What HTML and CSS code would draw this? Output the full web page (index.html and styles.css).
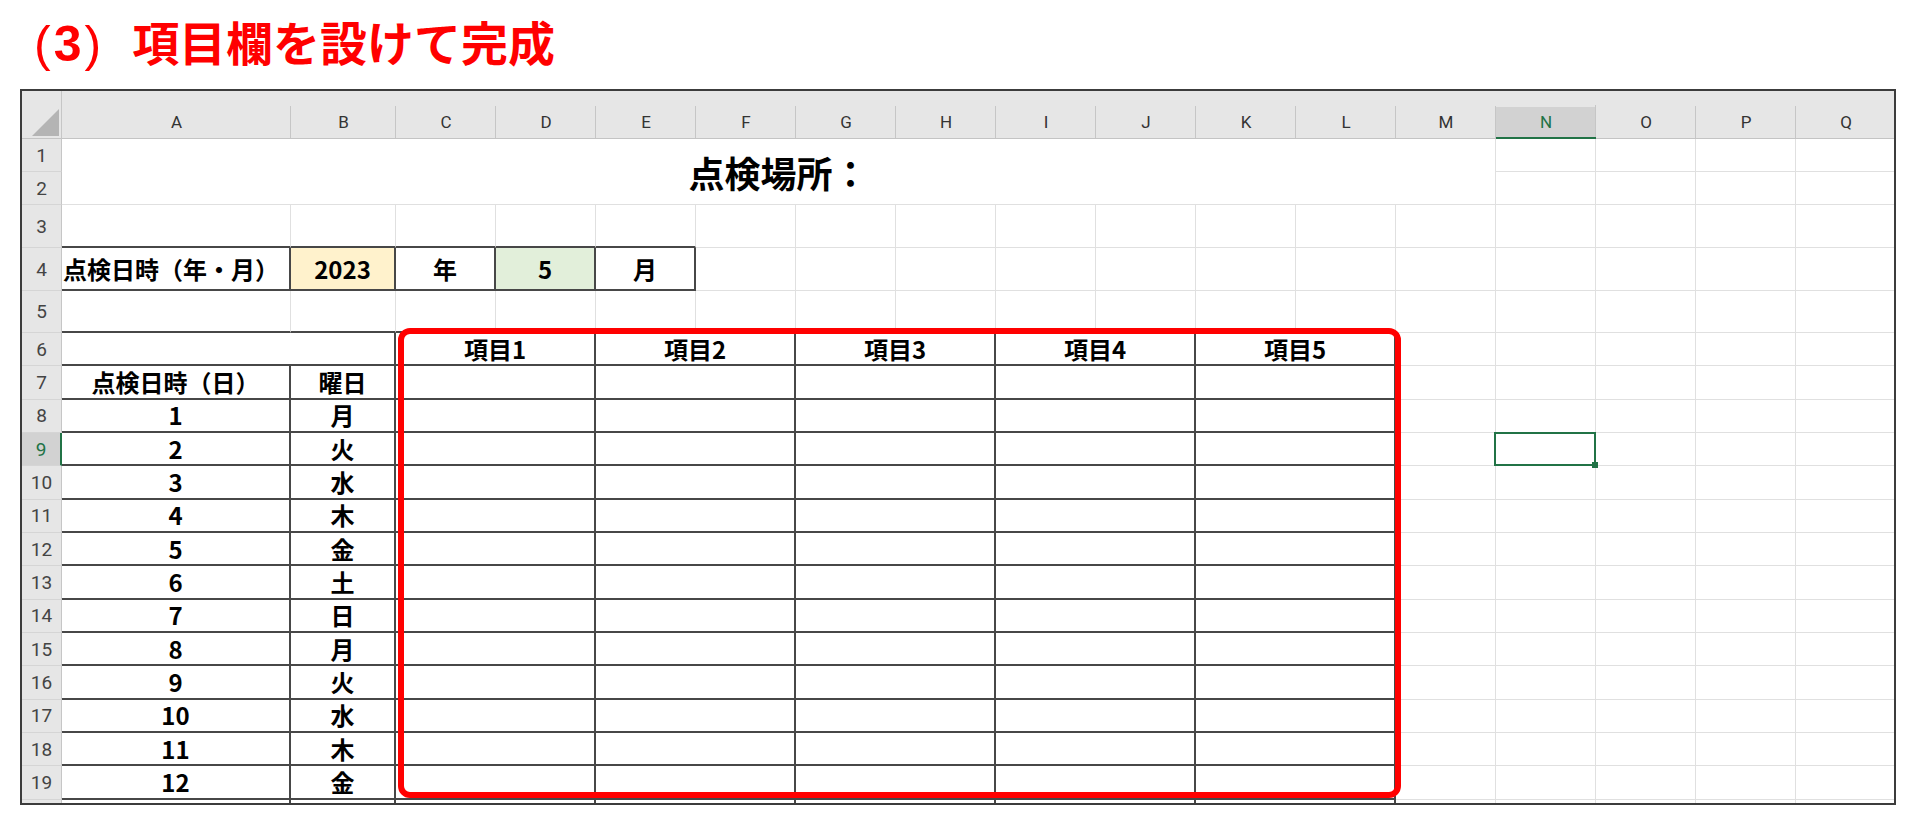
FILE: index.html
```html
<!DOCTYPE html>
<html lang="ja">
<head>
<meta charset="utf-8">
<title>項目欄を設けて完成</title>
<link rel="stylesheet" href="styles.css">
</head>
<body>
<div class="title"><span class="num"><span class="p">(</span>3<span class="p">)</span></span>項目欄を設けて完成</div>
<div class="frame">
  <div class="sheet">
    <div class="corner"><svg width="27" height="27" viewBox="0 0 27 27"><polygon points="27,0 27,27 0,27" fill="#b4b4b4"/></svg></div>
    <div class="ch">A</div><div class="ch">B</div><div class="ch">C</div><div class="ch">D</div><div class="ch">E</div><div class="ch">F</div><div class="ch">G</div><div class="ch">H</div><div class="ch">I</div><div class="ch">J</div><div class="ch">K</div><div class="ch">L</div><div class="ch">M</div><div class="ch on">N</div><div class="ch">O</div><div class="ch">P</div><div class="ch">Q</div>

    <div class="rh">1</div>
    <div class="c place">点検場所：</div>
    <div class="c"></div><div class="c"></div><div class="c"></div><div class="c"></div>

    <div class="rh">2</div>
    <div class="c"></div><div class="c"></div><div class="c"></div><div class="c"></div>

    <div class="rh">3</div>
    <div class="c db"></div><div class="c db"></div><div class="c db"></div><div class="c db"></div><div class="c db"></div>
    <div class="c"></div><div class="c"></div><div class="c"></div><div class="c"></div><div class="c"></div><div class="c"></div><div class="c"></div><div class="c"></div><div class="c"></div><div class="c"></div><div class="c"></div><div class="c"></div>

    <div class="rh">4</div>
    <div class="c db dr left">点検日時（年・月）</div>
    <div class="c db dr yel">2023</div>
    <div class="c db dr">年</div>
    <div class="c db dr grn">5</div>
    <div class="c db dr">月</div>
    <div class="c"></div><div class="c"></div><div class="c"></div><div class="c"></div><div class="c"></div><div class="c"></div><div class="c"></div><div class="c"></div><div class="c"></div><div class="c"></div><div class="c"></div><div class="c"></div>

    <div class="rh">5</div>
    <div class="c db"></div><div class="c db"></div><div class="c db"></div><div class="c db"></div><div class="c db"></div><div class="c db"></div><div class="c db"></div><div class="c db"></div><div class="c db"></div><div class="c db"></div><div class="c db"></div><div class="c db"></div>
    <div class="c"></div><div class="c"></div><div class="c"></div><div class="c"></div><div class="c"></div>

    <div class="rh">6</div>
    <div class="c s2 db dr"></div>
    <div class="c s2 db dr">項目1</div><div class="c s2 db dr">項目2</div><div class="c s2 db dr">項目3</div><div class="c s2 db dr">項目4</div><div class="c s2 db dr">項目5</div>
    <div class="c"></div><div class="c"></div><div class="c"></div><div class="c"></div><div class="c"></div>

    <div class="rh">7</div>
    <div class="c db dr">点検日時（日）</div><div class="c db dr">曜日</div>
    <div class="c s2 db dr"></div><div class="c s2 db dr"></div><div class="c s2 db dr"></div><div class="c s2 db dr"></div><div class="c s2 db dr"></div>
    <div class="c"></div><div class="c"></div><div class="c"></div><div class="c"></div><div class="c"></div>

    <div class="rh">8</div>
    <div class="c db dr">1</div><div class="c db dr">月</div>
    <div class="c s2 db dr"></div><div class="c s2 db dr"></div><div class="c s2 db dr"></div><div class="c s2 db dr"></div><div class="c s2 db dr"></div>
    <div class="c"></div><div class="c"></div><div class="c"></div><div class="c"></div><div class="c"></div>

    <div class="rh on">9</div>
    <div class="c db dr">2</div><div class="c db dr">火</div>
    <div class="c s2 db dr"></div><div class="c s2 db dr"></div><div class="c s2 db dr"></div><div class="c s2 db dr"></div><div class="c s2 db dr"></div>
    <div class="c"></div><div class="c sel"></div><div class="c"></div><div class="c"></div><div class="c"></div>

    <div class="rh">10</div>
    <div class="c db dr">3</div><div class="c db dr">水</div>
    <div class="c s2 db dr"></div><div class="c s2 db dr"></div><div class="c s2 db dr"></div><div class="c s2 db dr"></div><div class="c s2 db dr"></div>
    <div class="c"></div><div class="c"></div><div class="c"></div><div class="c"></div><div class="c"></div>

    <div class="rh">11</div>
    <div class="c db dr">4</div><div class="c db dr">木</div>
    <div class="c s2 db dr"></div><div class="c s2 db dr"></div><div class="c s2 db dr"></div><div class="c s2 db dr"></div><div class="c s2 db dr"></div>
    <div class="c"></div><div class="c"></div><div class="c"></div><div class="c"></div><div class="c"></div>

    <div class="rh">12</div>
    <div class="c db dr">5</div><div class="c db dr">金</div>
    <div class="c s2 db dr"></div><div class="c s2 db dr"></div><div class="c s2 db dr"></div><div class="c s2 db dr"></div><div class="c s2 db dr"></div>
    <div class="c"></div><div class="c"></div><div class="c"></div><div class="c"></div><div class="c"></div>

    <div class="rh">13</div>
    <div class="c db dr">6</div><div class="c db dr">土</div>
    <div class="c s2 db dr"></div><div class="c s2 db dr"></div><div class="c s2 db dr"></div><div class="c s2 db dr"></div><div class="c s2 db dr"></div>
    <div class="c"></div><div class="c"></div><div class="c"></div><div class="c"></div><div class="c"></div>

    <div class="rh">14</div>
    <div class="c db dr">7</div><div class="c db dr">日</div>
    <div class="c s2 db dr"></div><div class="c s2 db dr"></div><div class="c s2 db dr"></div><div class="c s2 db dr"></div><div class="c s2 db dr"></div>
    <div class="c"></div><div class="c"></div><div class="c"></div><div class="c"></div><div class="c"></div>

    <div class="rh">15</div>
    <div class="c db dr">8</div><div class="c db dr">月</div>
    <div class="c s2 db dr"></div><div class="c s2 db dr"></div><div class="c s2 db dr"></div><div class="c s2 db dr"></div><div class="c s2 db dr"></div>
    <div class="c"></div><div class="c"></div><div class="c"></div><div class="c"></div><div class="c"></div>

    <div class="rh">16</div>
    <div class="c db dr">9</div><div class="c db dr">火</div>
    <div class="c s2 db dr"></div><div class="c s2 db dr"></div><div class="c s2 db dr"></div><div class="c s2 db dr"></div><div class="c s2 db dr"></div>
    <div class="c"></div><div class="c"></div><div class="c"></div><div class="c"></div><div class="c"></div>

    <div class="rh">17</div>
    <div class="c db dr">10</div><div class="c db dr">水</div>
    <div class="c s2 db dr"></div><div class="c s2 db dr"></div><div class="c s2 db dr"></div><div class="c s2 db dr"></div><div class="c s2 db dr"></div>
    <div class="c"></div><div class="c"></div><div class="c"></div><div class="c"></div><div class="c"></div>

    <div class="rh">18</div>
    <div class="c db dr">11</div><div class="c db dr">木</div>
    <div class="c s2 db dr"></div><div class="c s2 db dr"></div><div class="c s2 db dr"></div><div class="c s2 db dr"></div><div class="c s2 db dr"></div>
    <div class="c"></div><div class="c"></div><div class="c"></div><div class="c"></div><div class="c"></div>

    <div class="rh">19</div>
    <div class="c db dr">12</div><div class="c db dr">金</div>
    <div class="c s2 db dr"></div><div class="c s2 db dr"></div><div class="c s2 db dr"></div><div class="c s2 db dr"></div><div class="c s2 db dr"></div>
    <div class="c"></div><div class="c"></div><div class="c"></div><div class="c"></div><div class="c"></div>

    <div class="rh"></div>
    <div class="c db dr"></div><div class="c db dr"></div>
    <div class="c s2 db dr"></div><div class="c s2 db dr"></div><div class="c s2 db dr"></div><div class="c s2 db dr"></div><div class="c s2 db dr"></div>
    <div class="c"></div><div class="c"></div><div class="c"></div><div class="c"></div><div class="c"></div>
  </div>
  <div class="mark"></div>
</div>
</body>
</html>
```

FILE: styles.css
```css
* { box-sizing: border-box; }

body {
  margin: 0;
  background: #ffffff;
}

.title {
  height: 89px;
  padding: 17px 0 0 34px;
  font: 700 47px/47px "Noto Sans CJK JP", sans-serif;
  color: #ff0000;
  white-space: nowrap;
}

.title .num {
  font-family: "Liberation Sans", "Noto Sans CJK JP", sans-serif;
  font-size: 50px;
  letter-spacing: 3px;
  margin-right: 28px;
}

.title .num .p {
  font-weight: 400;
}

.frame {
  position: relative;
  margin-left: 20px;
  width: 1876px;
  height: 716px;
  border: 2px solid #3c3c3c;
}

.sheet {
  display: grid;
  grid-template-columns: 40px 229px 105px repeat(15, 100px);
  grid-template-rows: 48px 33px 33px 43px 43px 42px repeat(14, 33.357px) 40px;
  height: 712px;
  overflow: hidden;
}

.corner {
  background: #e6e6e6;
  border-right: 1px solid #c6c6c6;
  border-bottom: 1px solid #c4c4c4;
  padding: 18px 0 0 10px;
}

.corner svg { display: block; }

.ch {
  background: linear-gradient(#c6c6c6, #c6c6c6) right bottom / 1px 32px no-repeat #e6e6e6;
  border-bottom: 1px solid #c4c4c4;
  padding-top: 16px;
  display: flex;
  align-items: center;
  justify-content: center;
  font: 400 17px/1 Roboto, "Noto Sans", sans-serif;
  color: #333333;
}

.ch.on {
  background:
    linear-gradient(#c6c6c6, #c6c6c6) right bottom / 1px 32px no-repeat,
    linear-gradient(#e6e6e6 16px, #d2d2d2 16px);
  border-bottom: 2px solid #217346;
  color: #217346;
}

.rh {
  background: #e6e6e6;
  border-right: 1px solid #c6c6c6;
  border-bottom: 1px solid #d5d5d5;
  display: flex;
  align-items: center;
  justify-content: center;
  font: 400 19px/1 Roboto, "Noto Sans", sans-serif;
  color: #444444;
}

.rh.on {
  background: #d2d2d2;
  color: #217346;
  border-right: 2px solid #217346;
}

.c {
  border-right: 1px solid #e0e0e0;
  border-bottom: 1px solid #e0e0e0;
  display: flex;
  align-items: center;
  justify-content: center;
  font: 700 24px/1 "Noto Sans CJK JP", sans-serif;
  color: #000000;
  white-space: nowrap;
}

.db { border-bottom: 2px solid #474747; }
.dr { border-right: 2px solid #474747; }

.s2 { grid-column: span 2; }

.place {
  grid-column: span 13;
  grid-row: span 2;
  font-size: 36px;
}

.left {
  justify-content: flex-start;
  padding-left: 1px;
}

.yel { background: #fff2cc; }
.grn { background: #e2efda; }

.sel { position: relative; }

.sel::after {
  content: "";
  position: absolute;
  left: -2px;
  top: -1px;
  right: -1px;
  bottom: -1px;
  border: 2px solid #217346;
}

.sel::before {
  content: "";
  position: absolute;
  right: -3px;
  bottom: -3px;
  width: 6px;
  height: 6px;
  background: #217346;
  z-index: 1;
}

.mark {
  position: absolute;
  left: 376px;
  top: 237px;
  width: 1003px;
  height: 470px;
  border: 6px solid #ff0000;
  border-radius: 12px;
  pointer-events: none;
}
```
